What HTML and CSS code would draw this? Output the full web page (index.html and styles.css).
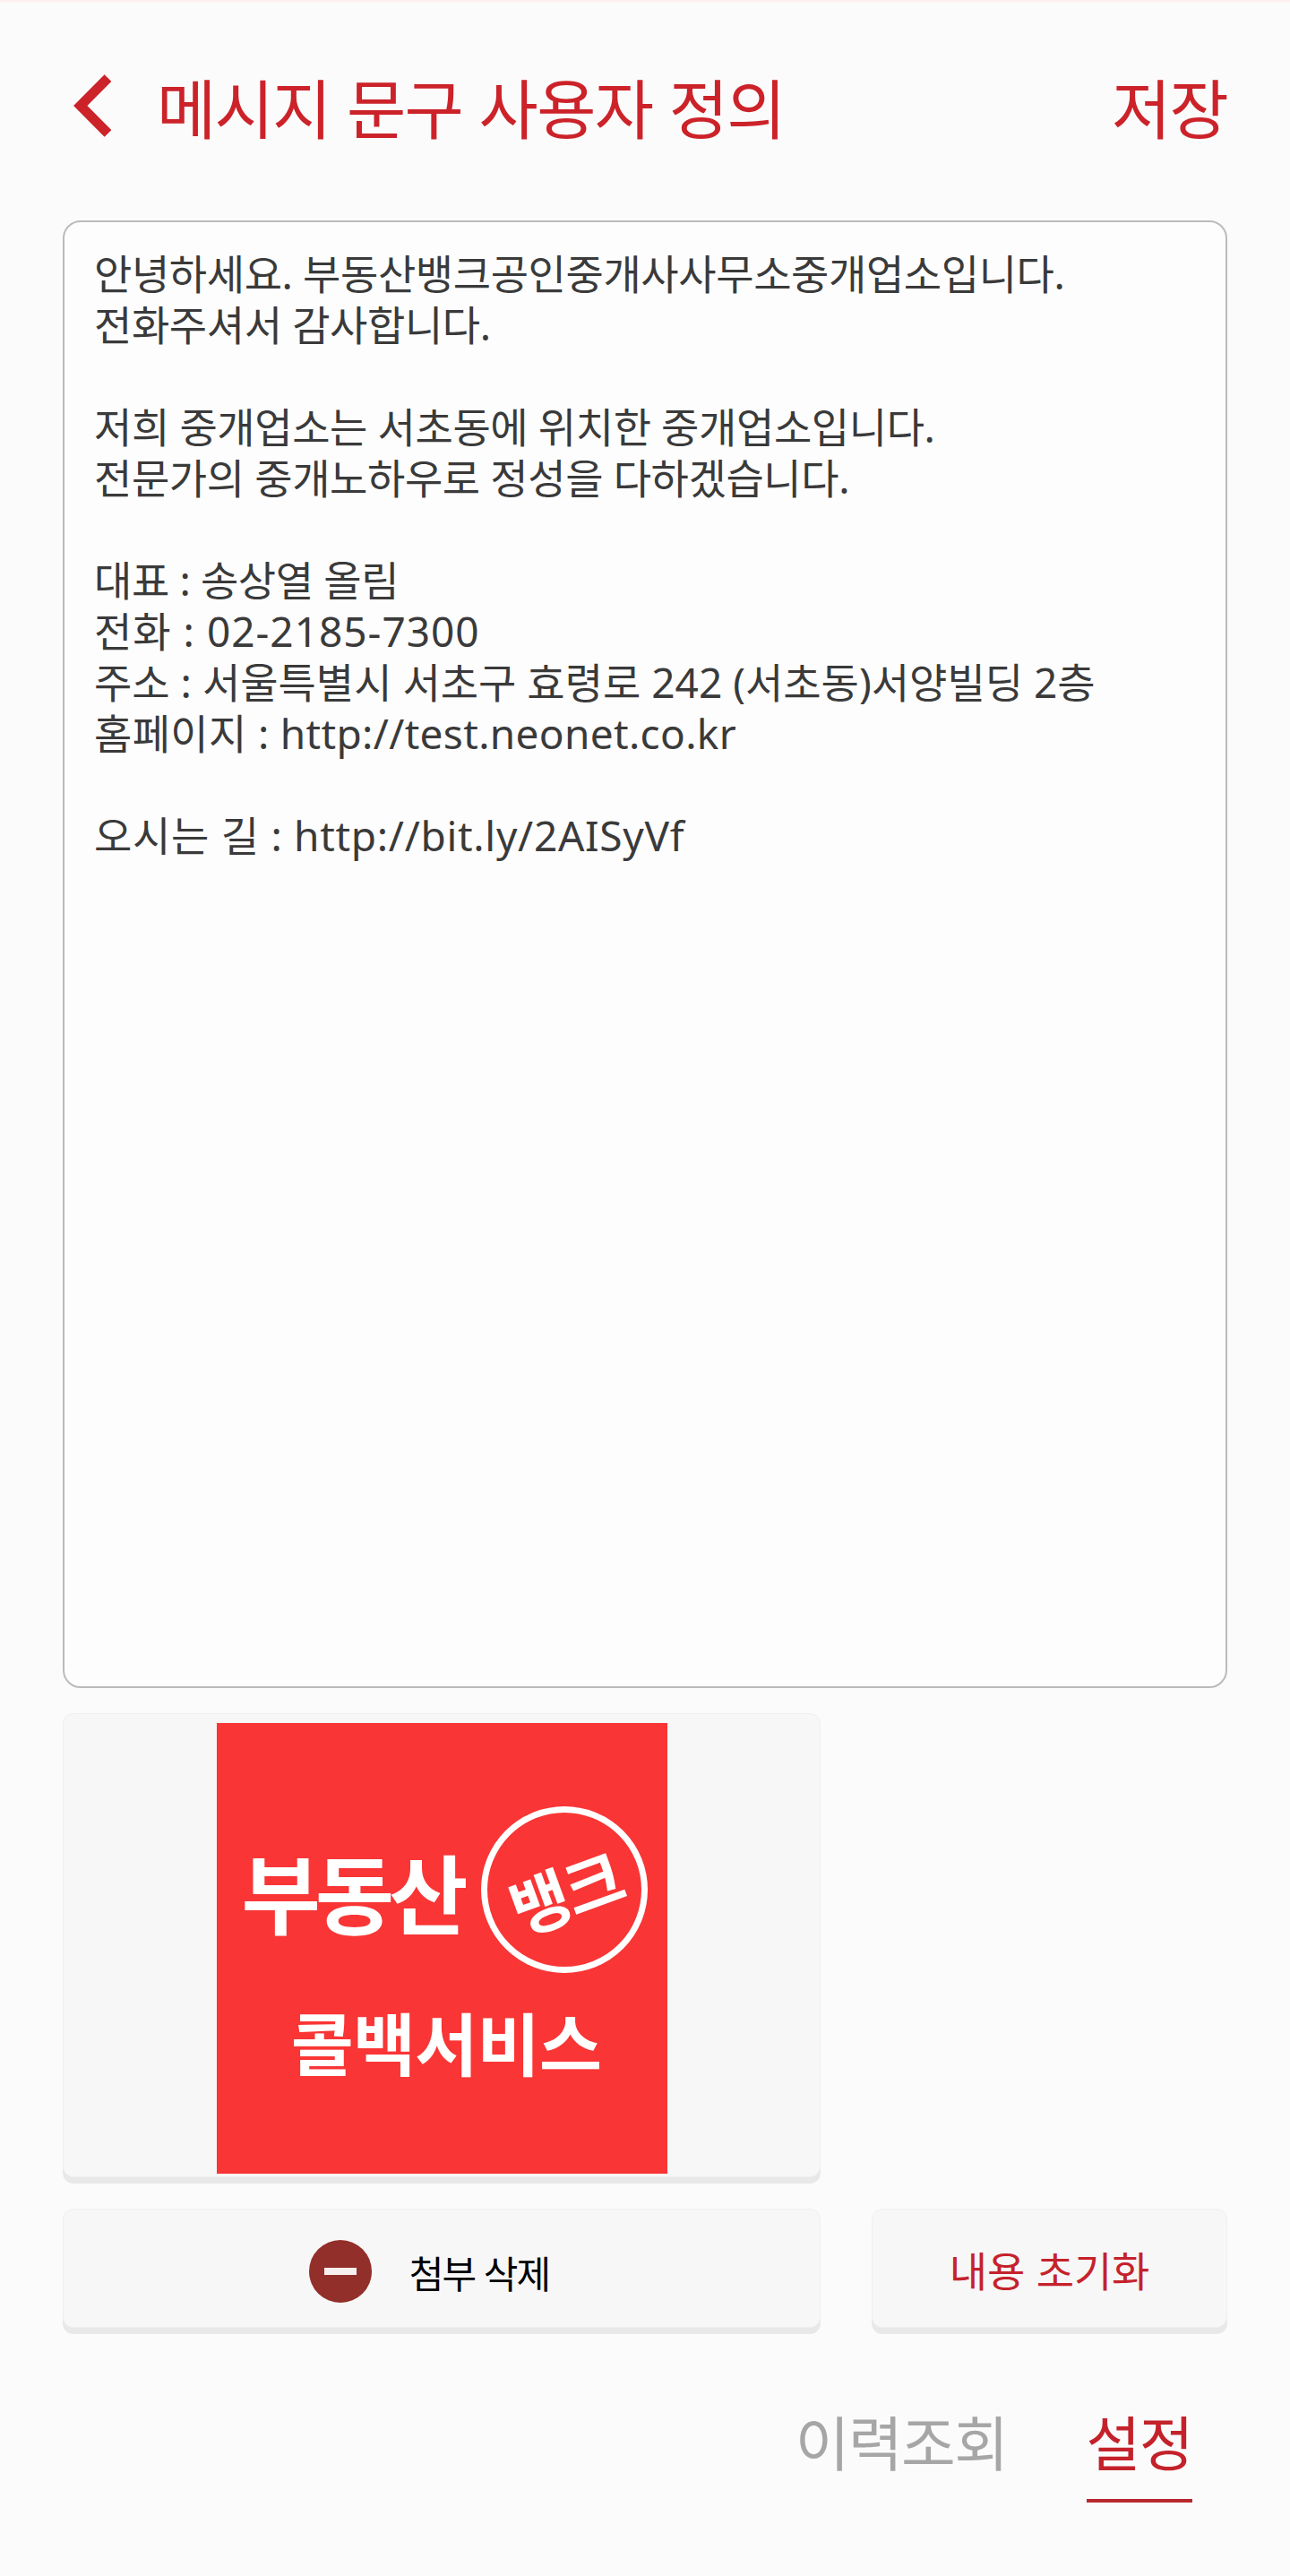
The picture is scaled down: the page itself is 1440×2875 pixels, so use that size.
FILE: index.html
```html
<!DOCTYPE html>
<html lang="ko">
<head>
  <meta charset="UTF-8" />
  <meta name="viewport" content="width=device-width, initial-scale=1.0"/>
  <title>메시지 문구 사용자 정의</title>
  <link rel="stylesheet" href="styles.css">
</head>
<body>
  <div class="screen">
    <header class="top-bar">
      <div class="top-left">
        <svg class="back-icon" viewBox="0 0 42 70" aria-hidden="true">
          <path d="M38.5 4 L7.8 35 L38.5 66" fill="none" stroke="#cc2229" stroke-width="11"/>
        </svg>
        <h1 class="title">메시지 문구 사용자 정의</h1>
      </div>
      <div class="save">저장</div>
    </header>

    <div class="message-box">
      <p class="line">안녕하세요. 부동산뱅크공인중개사사무소중개업소입니다.</p>
      <p class="line">전화주셔서 감사합니다.</p>
      <p class="line para">저희 중개업소는 서초동에 위치한 중개업소입니다.</p>
      <p class="line">전문가의 중개노하우로 정성을 다하겠습니다.</p>
      <p class="line para">대표 : 송상열 올림</p>
      <p class="line phone">전화 : 02-2185-7300</p>
      <p class="line address">주소 : 서울특별시 서초구 효령로 242 (서초동)서양빌딩 2층</p>
      <p class="line homepage">홈페이지 : http://test.neonet.co.kr</p>
      <p class="line para directions">오시는 길 : http://bit.ly/2AISyVf</p>
    </div>

    <div class="attach-card">
      <div class="logo">
        <div class="logo-row">
          <span class="logo-name">부동산</span>
          <span class="logo-badge"><span class="logo-badge-text">뱅크</span></span>
        </div>
        <div class="logo-sub">콜백서비스</div>
      </div>
    </div>

    <div class="actions">
      <button class="btn btn-delete">
        <span class="minus-icon"></span>
        <span>첨부 삭제</span>
      </button>
      <button class="btn btn-reset">내용 초기화</button>
    </div>

    <nav class="tabs">
      <div class="tab">이력조회</div>
      <div class="tab active">설정</div>
    </nav>
  </div>
</body>
</html>
```

FILE: styles.css
```css
html, body {
  margin: 0;
  padding: 0;
}
body {
  background: #fbfbfb;
  font-family: "Noto Sans CJK KR", "Noto Sans", sans-serif;
}
.screen {
  width: 1440px;
  height: 2875px;
  padding: 0 70px;
  box-sizing: border-box;
  border-top: 2px solid #ffeef0;
  overflow: hidden;
}
.top-bar {
  display: flex;
  justify-content: space-between;
  align-items: center;
  height: 100px;
  padding-top: 66px;
  margin-bottom: 78px;
  color: #cc2229;
}
.top-left {
  display: flex;
  align-items: center;
}
.back-icon {
  width: 42px;
  height: 70px;
  margin-left: 12px;
  margin-right: 51px;
}
.title {
  margin: 0;
  font-size: 72px;
  font-weight: 400;
  letter-spacing: -1.7px;
  line-height: 100px;
}
.save {
  font-size: 72px;
  letter-spacing: -1.7px;
  line-height: 100px;
}
.message-box {
  height: 1638px;
  box-sizing: border-box;
  padding: 29px 33px;
  border: 2px solid #bbbbbb;
  border-radius: 20px;
  background: #fdfdfd;
  color: #3a3a3a;
  font-family: "Noto Sans", "Noto Sans CJK KR", sans-serif;
  font-size: 46px;
  letter-spacing: -0.4px;
  line-height: 57px;
}
.line {
  margin: 0;
}
.para {
  margin-top: 57px;
}
.phone {
  letter-spacing: 1px;
}
.address {
  letter-spacing: 0;
}
.homepage {
  letter-spacing: 0.33px;
}
.directions {
  letter-spacing: 0.7px;
}
.attach-card {
  display: flex;
  justify-content: center;
  width: 846px;
  height: 518px;
  box-sizing: border-box;
  margin-top: 28px;
  padding-top: 10px;
  border: 1px solid #efefef;
  border-radius: 12px;
  background: #f7f7f7;
  box-shadow: 0 7px 0 #e8e8e8;
}
.logo {
  width: 503px;
  height: 503px;
  background: #f93535;
  color: #ffffff;
  font-weight: 700;
  text-align: center;
}
.logo-row {
  display: flex;
  align-items: center;
  height: 186px;
  margin-top: 93px;
  padding-left: 28px;
}
.logo-name {
  font-size: 96px;
  letter-spacing: -6px;
}
.logo-badge {
  display: flex;
  justify-content: center;
  align-items: center;
  width: 186px;
  height: 186px;
  box-sizing: border-box;
  margin-left: 21px;
  border: 7px solid #ffffff;
  border-radius: 50%;
}
.logo-badge-text {
  font-size: 72px;
  letter-spacing: -3px;
  transform: rotate(-20deg);
}
.logo-sub {
  margin-top: 36px;
  padding-left: 10px;
  font-size: 76px;
  line-height: 80px;
  letter-spacing: -0.6px;
}
.actions {
  display: grid;
  grid-template-columns: 846px 397px;
  justify-content: space-between;
  margin-top: 35px;
}
.btn {
  display: flex;
  justify-content: center;
  align-items: center;
  height: 133px;
  padding: 0;
  border: 1px solid #efefef;
  border-radius: 12px;
  background: #f7f7f7;
  box-shadow: 0 7px 0 #e8e8e8;
  font-family: inherit;
}
.btn-delete {
  gap: 42px;
  padding-top: 7px;
  padding-right: 28px;
  color: #000000;
  font-size: 42px;
  letter-spacing: -2px;
}
.minus-icon {
  position: relative;
  width: 70px;
  height: 70px;
  border-radius: 50%;
  background: #922f2a;
}
.minus-icon::after {
  content: "";
  position: absolute;
  top: 31px;
  left: 17px;
  width: 36px;
  height: 8px;
  background: #f7f0ee;
}
.btn-reset {
  color: #c5222b;
  font-size: 46px;
  letter-spacing: -0.2px;
}
.tabs {
  display: flex;
  justify-content: flex-end;
  gap: 88px;
  margin-top: 76px;
  padding-right: 39px;
  font-size: 66px;
  letter-spacing: -1.5px;
}
.tab {
  height: 115px;
  line-height: 98px;
  color: #a6a6a6;
}
.tab.active {
  color: #c4222b;
  border-bottom: 4px solid #b9282f;
}
```
